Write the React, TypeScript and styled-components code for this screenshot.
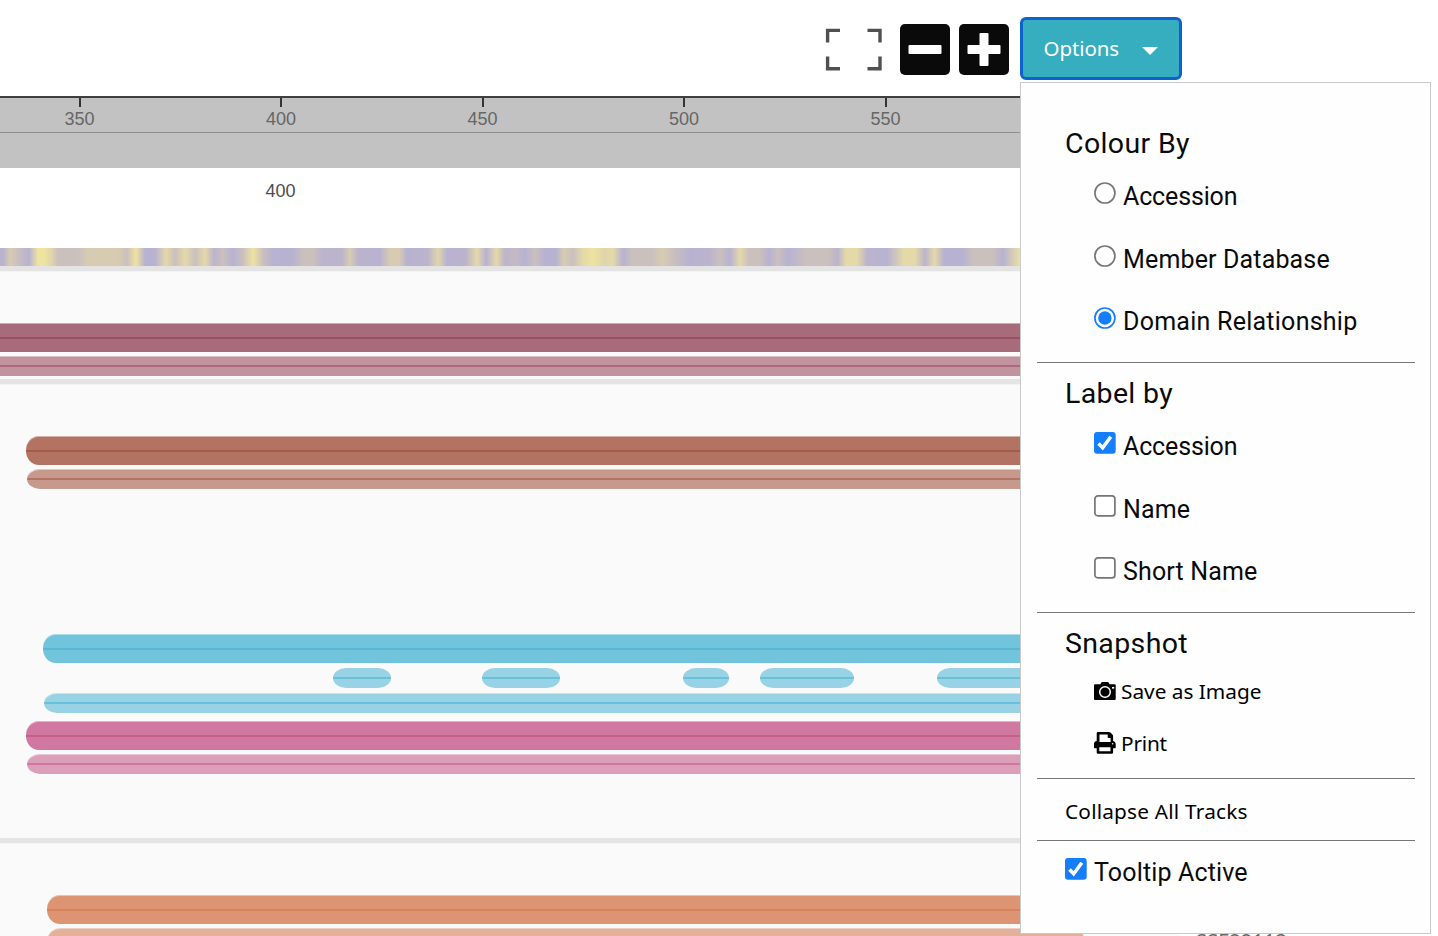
import React from 'react';
import styled, { createGlobalStyle } from 'styled-components';

const GlobalStyle = createGlobalStyle`
  *, *::before, *::after { box-sizing: border-box; }
  html, body { margin: 0; padding: 0; overflow: hidden; background: #fff; }
`;

const uiFont = `Roboto, 'Noto Sans', sans-serif`;
const buttonFont = `'Noto Sans', Roboto, sans-serif`;

const Page = styled.div`
  position: relative;
  width: 1438px;
  height: 936px;
  overflow: hidden;
  background: #fff;
  color: #0a0a0a;
  font-family: ${uiFont};
  display: flex;
  flex-direction: column;
`;

const Toolbar = styled.header`
  flex: none;
  height: 96px;
  display: flex;
  align-items: flex-start;
  padding: 17px 0 0 825px;
`;

const FullscreenButton = styled.button`
  border: 0;
  padding: 0;
  background: none;
  width: 57px;
  height: 43px;
  margin: 11px 17.5px 0 0;
  svg { display: block; }
`;

const ZoomButton = styled.button`
  border: 0;
  padding: 0;
  width: 50.5px;
  height: 50.5px;
  margin: 7px 8.5px 0 0;
  border-radius: 5px;
  background: #0a0a0a;
  svg { display: block; }
`;

const OptionsButton = styled.button`
  width: 162px;
  height: 63px;
  margin-left: 2px;
  border: 3px solid #0d62cc;
  border-radius: 6px;
  background: #37adc0;
  color: #fefefe;
  display: flex;
  align-items: center;
  justify-content: space-between;
  padding: 0 21px 1px;
  font: 400 20.5px/30px ${buttonFont};
  letter-spacing: -0.1px;
`;

const Caret = styled.span`
  margin-top: 5px;
  border: 8px solid transparent;
  border-top-color: #fefefe;
  border-bottom: 0;
`;

const Chart = styled.main`
  flex: 1;
  width: 1180px;
  display: flex;
  flex-direction: column;
  background: #fafafa;
  overflow: hidden;
`;

const Ruler = styled.div`
  flex: none;
  height: 37px;
  width: 1020px;
  border-top: 2px solid #3f3f3f;
  border-bottom: 1px solid #8e8e8e;
  background: #c2c2c2;
  display: flex;
  padding-left: 49.5px;
  overflow: hidden;
`;

const Tick = styled.div`
  flex: none;
  width: 60px;
  margin-right: 141.5px;
  display: flex;
  flex-direction: column;
  align-items: center;
  font: 18px/20px 'Liberation Sans', sans-serif;
  color: #666;
  &::before {
    content: '';
    width: 2px;
    height: 9px;
    margin-bottom: 2px;
    background: #333;
  }
`;

const RulerBand = styled.div`
  flex: none;
  height: 35px;
  background: #c2c2c2;
`;

const SequenceRow = styled.div`
  flex: none;
  height: 80px;
  padding: 13px 0 0 265.5px;
  background: #fff;
  font: 18px/20px 'Liberation Sans', sans-serif;
  color: #4d4d4d;
`;

const Hydrophobicity = styled.div<{ $stops: string }>`
  flex: none;
  width: 1020px;
  height: 18px;
  background: linear-gradient(to right, ${(p) => p.$stops});
`;

const Separator = styled.div<{ $gap?: number }>`
  flex: none;
  height: 6px;
  margin-top: ${(p) => p.$gap ?? 0}px;
  background: #e4e4e4;
  border-bottom: 1px solid #f3f3f3;
`;

const Lane = styled.div<{ $gap: number; $tall?: boolean; $start?: number }>`
  flex: none;
  height: ${(p) => (p.$tall ? 29 : 20)}px;
  margin-top: ${(p) => p.$gap}px;
  padding-left: ${(p) => p.$start ?? 0}px;
  display: flex;
`;

const Feature = styled.div<{
  $fill: string;
  $line: string;
  $width?: number;
  $after?: number;
  $tall?: boolean;
  $flat?: boolean;
  $soft?: boolean;
}>`
  flex: ${(p) => (p.$width ? 'none' : '1')};
  width: ${(p) => (p.$width ? `${p.$width}px` : 'auto')};
  margin-right: ${(p) => p.$after ?? 0}px;
  border-radius: ${(p) => (p.$flat ? '0' : p.$tall ? '13px / 14px' : '13px / 10px')};
  background-color: ${(p) => p.$fill};
  background-image: linear-gradient(${(p) => p.$line}, ${(p) => p.$line});
  background-size: 100% 2px;
  background-position: 0 ${(p) => (p.$tall ? 14 : 9)}px;
  background-repeat: no-repeat;
  box-shadow: ${(p) => (p.$soft ? 'inset 0 1px rgba(250, 250, 250, 0.45)' : 'none')};
`;

const Panel = styled.aside`
  position: absolute;
  left: 1020px;
  top: 82px;
  width: 411px;
  height: 852px;
  padding: 0 15px 0 16px;
  border: 1px solid #cacaca;
  background: #fefefe;
  display: flex;
  flex-direction: column;
`;

const Section = styled.section<{ $height: number; $top?: number; $last?: boolean }>`
  flex: none;
  height: ${(p) => p.$height}px;
  padding-top: ${(p) => p.$top ?? 0}px;
  border-bottom: ${(p) => (p.$last ? '0' : '1px solid #777')};
`;

const Heading = styled.h2<{ $after?: number }>`
  margin: 0 0 ${(p) => p.$after ?? 2}px;
  padding-left: 28px;
  font: 400 28.5px/40px ${uiFont};
  letter-spacing: 0.35px;
`;

const Choice = styled.label<{ $indent?: number; $track?: number }>`
  display: flex;
  align-items: center;
  height: 62.5px;
  padding-left: ${(p) => p.$indent ?? 57}px;
  gap: 7px;
  font: 400 25px/62.5px ${uiFont};
  letter-spacing: ${(p) => p.$track ?? 0.15}px;
  svg { flex: none; margin-bottom: 8.5px; }
`;

const Action = styled.button<{ $indent: number; $height: number; $track?: number }>`
  width: 100%;
  border: 0;
  background: none;
  color: #000;
  display: flex;
  align-items: center;
  height: ${(p) => p.$height}px;
  padding: 0 0 0 ${(p) => p.$indent}px;
  gap: 5px;
  font: 400 20.8px/30px ${buttonFont};
  letter-spacing: ${(p) => p.$track ?? 0}px;
  svg { flex: none; }
`;

const ClippedLabel = styled.span`
  position: absolute;
  left: 1196px;
  top: 926px;
  font: 20px/30px ${buttonFont};
  letter-spacing: 0.2px;
  color: #666;
`;

const Radio = ({ on }: { on?: boolean }) => (
  <svg width="22" height="22" viewBox="0 0 22 22">
    <circle cx="10.9" cy="11" r="10" fill="#fff" stroke={on ? '#157efb' : '#767676'} strokeWidth="1.7" />
    {on && <circle cx="10.9" cy="11" r="6.7" fill="#157efb" />}
  </svg>
);

const Check = ({ on }: { on?: boolean }) => (
  <svg width="22" height="22" viewBox="0 0 22 22">
    {on ? (
      <>
        <rect x="0" y="0" width="21.7" height="21.7" rx="3" fill="#157efb" />
        <path d="M4.5 11.600 L8.700 15.800 L16.800 4.800" fill="none" stroke="#fff" strokeWidth="3.5" />
      </>
    ) : (
      <rect x="0.9" y="0.9" width="20" height="20" rx="3" fill="#fff" stroke="#767676" strokeWidth="1.7" />
    )}
  </svg>
);

const CameraIcon = () => (
  <svg width="22" height="20" viewBox="0 0 22 20">
    <path d="M1 3.2h5.400L7.300 1.600Q7.600 1 8.400 1h5.200q.8 0 1.100.6l.9 1.600h5.100q1 0 1 1V18q0 1-1 1H1q-1 0-1-1V4.200q0-1 1-1z" />
    <circle cx="11" cy="11" r="5.3" fill="none" stroke="#fefefe" strokeWidth="1.5" />
    <rect x="18" y="6" width="2.2" height="1.6" fill="#fefefe" />
  </svg>
);

const PrintIcon = () => (
  <svg width="22" height="22" viewBox="0 0 22 22">
    <path d="M3.900 0H15q.9 0 1.500.6L18.600 2.700q.5.6.5 1.400V9q2.600.4 2.600 3v3.500q0 .7-.7.7h-1.900v4.300q0 1.200-1.200 1.200H3.900q-1.200 0-1.200-1.200v-4.300H.7q-.7 0-.7-.7V12q0-2.600 2.700-3V1.200Q2.700 0 3.900 0z" />
    <path fill="#fefefe" d="M5.500 2.500h8.200v2.700q0 .8.800.8h2.100v4H5.500zM5.300 15.200h11.200v4H5.300z" />
    <circle cx="18.600" cy="11.800" r=".8" fill="#fefefe" />
  </svg>
);

// Hydrophobicity colours as [position, colour]
const P = '#b8b2d2';
const V = '#bcb4cc';
const G = '#cac0be';
const T = '#d7ccb1';
const Y = '#e4d9a8';
const B = '#efe3a0';
const heat: [number, string][] = [
  [0, V], [3, P], [10, T], [18, G], [29, P], [38, B], [44, B], [52, '#dfd5ac'], [58, G], [78, G], [88, T], [118, T],
  [127, G], [136, B], [145, P], [155, P], [166, Y], [175, G], [185, Y], [195, G], [205, Y], [214, V], [223, G],
  [233, P], [243, G], [253, B], [263, G], [273, P], [293, P], [303, G], [313, G], [322, V], [342, V], [350, T],
  [358, V], [380, P], [390, T], [399, T], [407, P], [428, V], [438, '#e0d6aa'], [447, P], [466, V], [477, Y],
  [486, P], [496.5, Y], [505, V], [515, '#c4bac2'], [525, P], [535, G], [545, P], [556, P], [564, T], [573, G],
  [583, Y], [593, B], [604, '#dfd5ac'], [613, Y], [623, P], [632, G], [652, G], [662, T], [673, G], [690, P],
  [710, V], [720, G], [730, P], [740, Y], [749, G], [760, G], [769, P], [778, G], [788, P], [806, G], [828, G],
  [838, V], [846, Y], [857, Y], [867, V], [887, P], [904, Y], [915, Y], [925, V], [934.5, Y], [944, P], [963, P],
  [973, G], [993, G], [1003, P], [1020, '#eadfa4'],
];
const heatStops = heat.map(([x, c]) => `${c} ${x}px`).join(', ');

const paleBlue = { $fill: '#98d2e5', $line: '#68c0da' };
const segments = [
  { width: 58, after: 91 },
  { width: 78, after: 123.4 },
  { width: 46, after: 30.6 },
  { width: 94, after: 83 },
  { width: 240, after: 0 },
];

export default function App() {
  return (
    <Page>
      <GlobalStyle />
      <Toolbar>
        <FullscreenButton aria-label="Full screen">
          <svg width="57" height="43" viewBox="0 0 57 43" fill="none" stroke="#505050" strokeWidth="3.4">
            <path d="M2.600 14.500V2.400H15M42.500 2.400H55V14.500M2.600 28.500V40.700H15M42.500 40.700H55V28.500" />
          </svg>
        </FullscreenButton>
        <ZoomButton aria-label="Zoom out">
          <svg width="50" height="50" viewBox="0 0 50 50">
            <rect x="8.500" y="21" width="33" height="9" rx="1" fill="#fefefe" />
          </svg>
        </ZoomButton>
        <ZoomButton aria-label="Zoom in">
          <svg width="50" height="50" viewBox="0 0 50 50" fill="#fefefe">
            <rect x="8.500" y="21" width="33" height="9" rx="1" />
            <rect x="20.500" y="9" width="9" height="33" rx="1" />
          </svg>
        </ZoomButton>
        <OptionsButton>
          Options
          <Caret />
        </OptionsButton>
      </Toolbar>

      <Chart>
        <Ruler>
          {[350, 400, 450, 500, 550].map((n) => (
            <Tick key={n}>{n}</Tick>
          ))}
        </Ruler>
        <RulerBand />
        <SequenceRow>400</SequenceRow>
        <Hydrophobicity $stops={heatStops} />
        <Separator />

        <Lane $gap={51} $tall>
          <Feature $tall $flat $soft $fill="#a86b7b" $line="#995067" />
        </Lane>
        <Lane $gap={4}>
          <Feature $flat $soft $fill="#c0939e" $line="#ad6880" />
        </Lane>
        <Separator $gap={3} />

        <Lane $gap={51} $tall $start={26.3}>
          <Feature $tall $soft $fill="#b27363" $line="#a85a49" />
        </Lane>
        <Lane $gap={4} $start={27.3}>
          <Feature $soft $fill="#c6998c" $line="#b57365" />
        </Lane>

        <Lane $gap={145} $tall $start={42.5}>
          <Feature $tall $soft $fill="#71c4dc" $line="#57b8d4" />
        </Lane>
        <Lane $gap={5} $start={333}>
          {segments.map((s, i) => (
            <Feature key={i} $width={s.width} $after={s.after} {...paleBlue} />
          ))}
        </Lane>
        <Lane $gap={5} $start={43.5}>
          <Feature $soft {...paleBlue} />
        </Lane>
        <Lane $gap={8} $tall $start={26.3}>
          <Feature $tall $soft $fill="#d178a0" $line="#c65e8c" />
        </Lane>
        <Lane $gap={4} $start={27.3}>
          <Feature $soft $fill="#dc9fb9" $line="#d0769f" />
        </Lane>
        <Separator $gap={64} />

        <Lane $gap={51} $tall $start={46.5}>
          <Feature $tall $soft $fill="#dd9472" $line="#d6825d" />
        </Lane>
        <Lane $gap={4} $start={47.5}>
          <Feature $width={1036} $soft $fill="#e4b098" $line="#d98f6e" />
        </Lane>
      </Chart>

      <ClippedLabel>SSF88112</ClippedLabel>

      <Panel>
        <Section $height={280} $top={41}>
          <Heading>Colour By</Heading>
          <Choice $track={-0.15}><Radio />Accession</Choice>
          <Choice><Radio />Member Database</Choice>
          <Choice $track={0.25}><Radio on />Domain Relationship</Choice>
        </Section>
        <Section $height={250} $top={11}>
          <Heading>Label by</Heading>
          <Choice $track={-0.15}><Check on />Accession</Choice>
          <Choice><Check />Name</Choice>
          <Choice><Check />Short Name</Choice>
        </Section>
        <Section $height={166} $top={11}>
          <Heading $after={1}>Snapshot</Heading>
          <Action $indent={57} $height={52}><CameraIcon />Save as Image</Action>
          <Action $indent={57} $height={52} $track={-0.2}><PrintIcon />Print</Action>
        </Section>
        <Section $height={62} $top={1}>
          <Action $indent={28} $height={62} $track={0.2}>Collapse All Tracks</Action>
        </Section>
        <Section $height={92} $top={1} $last>
          <Choice $indent={28}><Check on />Tooltip Active</Choice>
        </Section>
      </Panel>
    </Page>
  );
}
